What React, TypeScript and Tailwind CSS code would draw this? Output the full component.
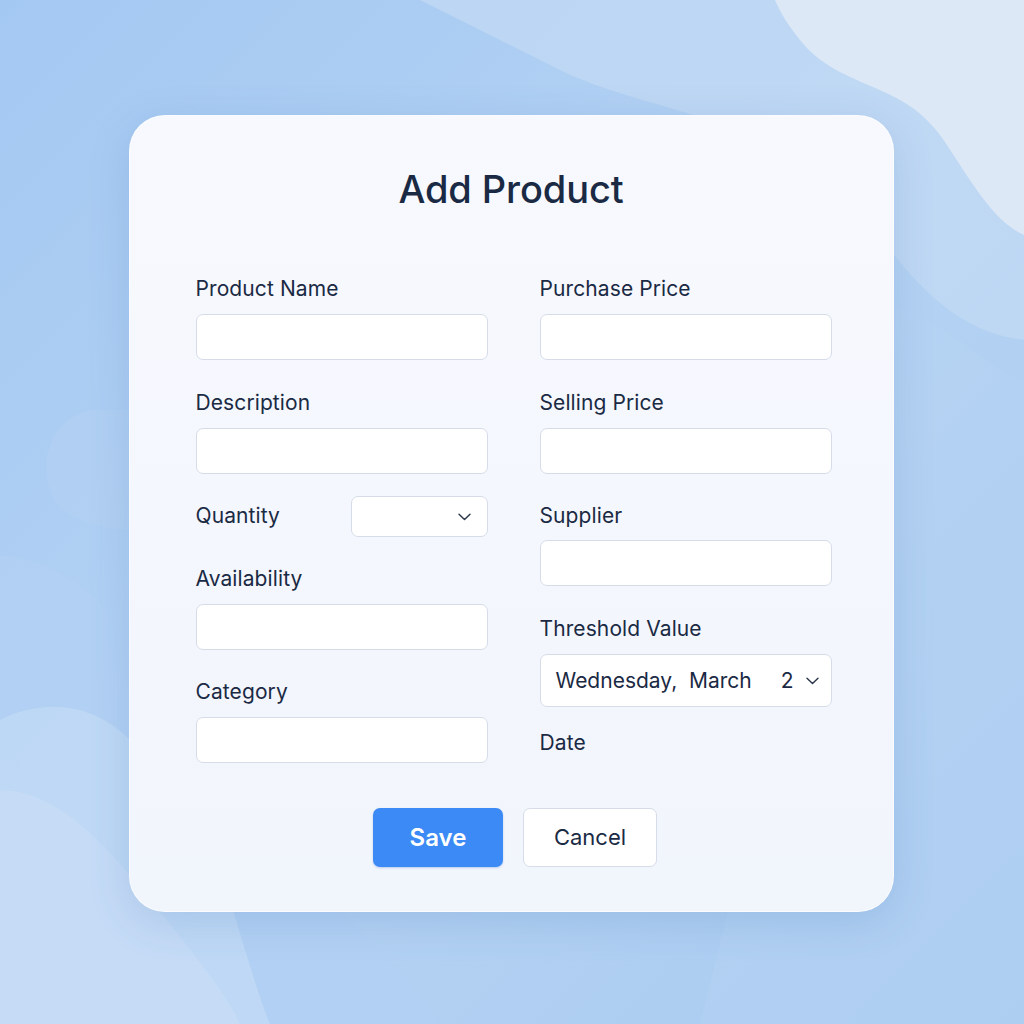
import React from "react";

const font = { fontFamily: "Inter, 'Noto Sans', sans-serif" };

function Label({ children, className = "" }: { children: React.ReactNode; className?: string }) {
  return <div className={"text-[21px] leading-[28px] tracking-[0.1px] text-[#1b2a44] " + className}>{children}</div>;
}

function Input({ className = "" }: { className?: string }) {
  return <div className={"h-[46px] w-full rounded-[7px] border border-[#d6dde8] bg-white " + className} />;
}

function Chevron({ className = "" }: { className?: string }) {
  return (
    <svg className={className} width="13" height="8" viewBox="0 0 13 8" fill="none">
      <path d="M1 1.2 L6.5 6.5 L12 1.2" stroke="#2a3548" strokeWidth="1.4" strokeLinecap="round" strokeLinejoin="round" />
    </svg>
  );
}

export default function App() {
  return (
    <div className="relative h-[1024px] w-[1024px] overflow-hidden bg-[#a9cbf2]" style={font}>
      <svg className="absolute inset-0" width="1024" height="1024" viewBox="0 0 1024 1024">
        <defs>
          <linearGradient id="bg" x1="0" y1="0" x2="1" y2="1">
            <stop offset="0" stopColor="#a3c8f2" />
            <stop offset="0.5" stopColor="#b6d3f3" />
            <stop offset="1" stopColor="#a9cbf0" />
          </linearGradient>
          <linearGradient id="card" x1="0" y1="0" x2="0" y2="1">
            <stop offset="0" stopColor="#f6f9fe" />
            <stop offset="1" stopColor="#f1f5fc" />
          </linearGradient>
        </defs>
        <rect width="1024" height="1024" fill="url(#bg)" />
        <path d="M420 0 L1024 0 L1024 340 C940 330 900 260 850 200 C780 120 640 110 560 70 C500 40 460 20 420 0 Z" fill="#c3daf4" opacity="0.7" />
        <path d="M775 0 L1024 0 L1024 235 C990 220 965 170 940 135 C900 80 840 90 800 40 C788 25 780 12 775 0 Z" fill="#dde8f6" />
        <path d="M880 300 C950 320 1000 380 1024 380 L1024 1024 L700 1024 Z" fill="#b6d3f3" opacity="0.35" />
        <path d="M0 555 C60 560 110 600 140 660 C180 740 230 800 300 870 C360 930 420 990 440 1024 L0 1024 Z" fill="#b1d0f3" opacity="0.8" />
        <path d="M0 720 C40 700 90 700 130 740 C170 780 200 820 230 900 C245 950 260 1000 270 1024 L0 1024 Z" fill="#c0d9f5" opacity="0.85" />
        <path d="M0 790 C60 790 110 850 150 900 C200 960 230 1000 240 1024 L0 1024 Z" fill="#c7ddf6" opacity="0.7" />
        <path d="M90 410 C50 420 40 460 50 490 C60 520 100 530 129 530 L129 410 Z" fill="#b2d0f2" opacity="0.6" />
      </svg>

      <div className="relative flex h-full w-full items-start justify-center pt-[115px]">
        <div className="ml-[-2px] flex h-[797px] w-[765px] flex-col rounded-[36px] border border-white/60 bg-gradient-to-b from-[#f7f9fe] to-[#f1f5fc] pt-[49px] shadow-[0_10px_40px_rgba(60,110,180,0.18)]">
          <h1 className="text-center text-[38px] font-medium leading-[48px] tracking-[-0.1px] text-[#1b2a44]">Add Product</h1>

          <div className="mt-[62px] flex pl-[66px]">
            {/* Left column */}
            <div className="flex w-[292px] flex-col">
              <Label>Product Name</Label>
              <Input className="mt-[11px]" />
              <Label className="mt-[29px]">Description</Label>
              <Input className="mt-[11px]" />
              <div className="mt-[22px] flex h-[41px] items-center justify-between">
                <Label className="mt-[-2px]">Quantity</Label>
                <div className="flex h-[41px] w-[137px] items-center justify-end rounded-[7px] border border-[#d6dde8] bg-white pr-[16px]">
                  <Chevron />
                </div>
              </div>
              <Label className="mt-[28px]">Availability</Label>
              <Input className="mt-[11px]" />
              <Label className="mt-[28px]">Category</Label>
              <Input className="mt-[11px]" />
            </div>

            {/* Right column */}
            <div className="ml-[52px] flex w-[292px] flex-col">
              <Label>Purchase Price</Label>
              <Input className="mt-[11px]" />
              <Label className="mt-[29px]">Selling Price</Label>
              <Input className="mt-[11px]" />
              <Label className="mt-[28px]">Supplier</Label>
              <Input className="mt-[10px]" />
              <Label className="mt-[29px]">Threshold Value</Label>
              <div className="mt-[11px] flex h-[53px] items-center rounded-[7px] border border-[#d6dde8] bg-white pl-[15px] pr-[12px] text-[21px] text-[#1b2a44]">
                <span className="whitespace-pre">Wednesday,  March</span>
                <span className="ml-auto">2</span>
                <Chevron className="ml-[12px]" />
              </div>
              <Label className="mt-[22px]">Date</Label>
            </div>
          </div>

          <div className="mt-[45px] flex justify-center gap-[20px] pl-[8px]">
            <button className="h-[59px] w-[130px] rounded-[7px] bg-[#3b8af6] text-[24px] font-semibold text-white shadow-[0_1px_2px_rgba(30,90,200,0.25)]">
              Save
            </button>
            <button className="h-[59px] w-[134px] rounded-[7px] border border-[#d6dde8] bg-white text-[22px] text-[#1b2a44]">
              Cancel
            </button>
          </div>
        </div>
      </div>
    </div>
  );
}
